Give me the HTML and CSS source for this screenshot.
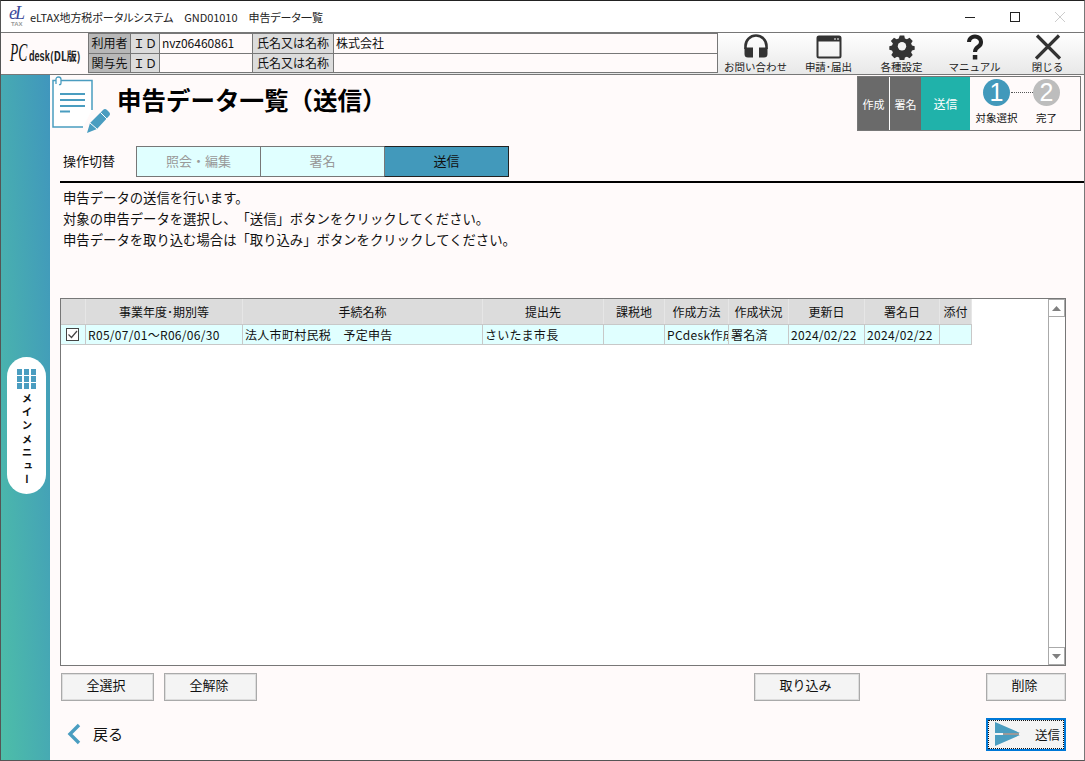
FILE: index.html
```html
<!DOCTYPE html>
<html lang="ja">
<head>
    <meta charset="UTF-8">
    <title>申告データ一覧</title>
    <link rel="stylesheet" href="styles.css">
</head>
<body>
<div class="window">
    <div class="titlebar">
        <div class="app_logo"><span class="el">eL</span><span class="tax">TAX</span></div>
        <div class="app_title">eLTAX地方税ポータルシステム　GND01010　申告データ一覧</div>
        <div class="win_btns">
            <span class="win_btn"><svg width="12" height="12" viewBox="0 0 12 12"><path d="M1 6.5h10" stroke="#222" fill="none"/></svg></span>
            <span class="win_btn"><svg width="12" height="12" viewBox="0 0 12 12"><rect x="1.5" y="1.5" width="9" height="9" stroke="#222" fill="none"/></svg></span>
            <span class="win_btn"><svg width="12" height="12" viewBox="0 0 12 12"><path d="M1 1l10 10M11 1L1 11" stroke="#ccc" fill="none"/></svg></span>
        </div>
    </div>

    <div class="toolbar">
        <div class="pc_logo"><span class="pc">PC</span><span class="desk">desk</span><span class="dl">(DL版)</span></div>
        <div class="user_table">
            <div class="cell head">利用者</div>
            <div class="cell label">ＩＤ</div>
            <div class="cell val">nvz06460861</div>
            <div class="cell label">氏名又は名称</div>
            <div class="cell val name">株式会社</div>
            <div class="cell head">関与先</div>
            <div class="cell label">ＩＤ</div>
            <div class="cell val"></div>
            <div class="cell label">氏名又は名称</div>
            <div class="cell val"></div>
        </div>
        <div class="tools">
            <div class="tool">
                <svg width="26" height="26" viewBox="0 0 26 26"><path d="M2.500 15V12a10.500 10.500 0 0 1 21 0v3" fill="none" stroke="#333" stroke-width="2.600"/><path d="M1.500 13.500h8.500v10H5q-3.500 0-3.500-3.500zM24.500 13.500H16v10h5q3.500 0 3.500-3.500z" fill="#333"/></svg>
                <span>お問い合わせ</span>
            </div>
            <div class="tool">
                <svg width="26" height="26" viewBox="0 0 26 26"><rect x="1.500" y="2.500" width="23" height="21" rx="1.500" fill="none" stroke="#333" stroke-width="2"/><rect x="1.500" y="2.500" width="23" height="5" fill="#333"/><path d="M18 5h2M21 5h2" stroke="#fff"/></svg>
                <span>申請･届出</span>
            </div>
            <div class="tool">
                <svg width="26" height="26" viewBox="0 0 26 26"><path d="M10.500 1h5l.7 3.300 2.300 1 2.900-1.800 3.500 3.500-1.800 2.900 1 2.300 3 .7v4l-3 .7-1 2.300 1.800 2.900-3.500 3.500-2.900-1.800-2.300 1-.7 3.300h-5l-.7-3.300-2.300-1-2.900 1.800-3.500-3.500 1.800-2.900-1-2.300-3-.7v-4l3-.7 1-2.300L.6 7 4.100 3.500l2.900 1.800 2.300-1z" transform="translate(1.300 .6) scale(.9)" fill="#333"/><circle cx="13" cy="12.300" r="4.200" fill="#f4f4f4"/></svg>
                <span>各種設定</span>
            </div>
            <div class="tool">
                <svg width="26" height="26" viewBox="0 0 26 26"><path d="M7 8a6 5.500 0 1 1 9.500 4.500c-2.300 1.500-3.500 2.500-3.500 5.500" fill="none" stroke="#222" stroke-width="4"/><rect x="10.800" y="21" width="4.500" height="4.500" fill="#222"/></svg>
                <span>マニュアル</span>
            </div>
            <div class="tool">
                <svg width="26" height="26" viewBox="0 0 26 26"><path d="M2 1.500l23 23M24 1.500L1 24.500" stroke="#333" stroke-width="3.200" fill="none"/></svg>
                <span>閉じる</span>
            </div>
        </div>
    </div>

    <div class="body_wrap">
        <div class="side">
            <div class="side_menu">
                <div class="grid_icon"><i></i><i></i><i></i><i></i><i></i><i></i><i></i><i></i><i></i></div>
                <div class="side_text">メインメニュー</div>
            </div>
        </div>

        <div class="main">
            <div class="page_head">
                <svg class="page_icon" width="58" height="58" viewBox="0 0 58 58">
                    <path d="M31 51H1V4.500h39V34" fill="#fff" stroke="#4a9dc0" stroke-width="1.500"/>
                    <path d="M4 8V3.500Q4 1 6.500 1T9 3.500V7Q9 9 7 8.500" fill="#fff" stroke="#4a9dc0" stroke-width="1.300"/>
                    <path d="M8 18h25M8 24h25M8 30h25M8 35.500h10" stroke="#4a9dc0" stroke-width="1.800" fill="none"/>
                    <path d="M35 57l3-10 13-13q2-2 4 0l2 2q2 2 0 4L45 53z" fill="#4a9dc0"/>
                    <path d="M48.500 36.500l6.500 6.500M38 47l7 6" stroke="#fff" fill="none"/>
                </svg>
                <h1 class="page_title">申告データ一覧（送信）</h1>
                <div class="steps">
                    <div class="step gray first">作成</div>
                    <div class="step gray">署名</div>
                    <div class="step now">送信</div>
                    <div class="progress">
                        <div class="prog_item"><span class="num blue">1</span><span>対象選択</span></div>
                        <div class="dots"></div>
                        <div class="prog_item"><span class="num gray2">2</span><span>完了</span></div>
                    </div>
                </div>
            </div>

            <div class="switch_row">
                <div class="switch_label">操作切替</div>
                <div class="tab">照会・編集</div>
                <div class="tab">署名</div>
                <div class="tab on">送信</div>
            </div>

            <div class="guide">
                <p>申告データの送信を行います。</p>
                <p>対象の申告データを選択し、「送信」ボタンをクリックしてください。</p>
                <p>申告データを取り込む場合は「取り込み」ボタンをクリックしてください。</p>
            </div>

            <div class="list_box">
                <div class="list">
                    <div class="row row_head">
                        <div class="c c0"></div>
                        <div class="c c1">事業年度･期別等</div>
                        <div class="c c2">手続名称</div>
                        <div class="c c3">提出先</div>
                        <div class="c c4">課税地</div>
                        <div class="c c5">作成方法</div>
                        <div class="c c6">作成状況</div>
                        <div class="c c7">更新日</div>
                        <div class="c c8">署名日</div>
                        <div class="c c9">添付</div>
                    </div>
                    <div class="row row_data">
                        <div class="c c0"><span class="check"><svg width="13" height="13" viewBox="0 0 13 13"><path d="M2.500 6.500l3 3 5.500-6.500" fill="none" stroke="#444" stroke-width="1.200"/></svg></span></div>
                        <div class="c c1">R05/07/01～R06/06/30</div>
                        <div class="c c2">法人市町村民税　予定申告</div>
                        <div class="c c3">さいたま市長</div>
                        <div class="c c4"></div>
                        <div class="c c5">PCdesk作成</div>
                        <div class="c c6">署名済</div>
                        <div class="c c7">2024/02/22</div>
                        <div class="c c8">2024/02/22</div>
                        <div class="c c9"></div>
                    </div>
                </div>
                <div class="scrollbar">
                    <div class="sb_btn"><svg width="9" height="5" viewBox="0 0 9 5"><path d="M4.500 0L9 5H0z" fill="#808080"/></svg></div>
                    <div class="sb_btn"><svg width="9" height="5" viewBox="0 0 9 5"><path d="M0 0h9L4.500 5z" fill="#808080"/></svg></div>
                </div>
            </div>

            <div class="btn_row">
                <button class="btn w93">全選択</button>
                <button class="btn w93">全解除</button>
                <div class="spacer"></div>
                <button class="btn w106">取り込み</button>
                <button class="btn w80 del">削除</button>
            </div>

            <div class="foot_row">
                <div class="back">
                    <svg width="16" height="22" viewBox="0 0 16 22"><path d="M13 2L4 11l9 9" fill="none" stroke="#4a9dc0" stroke-width="3.400"/></svg>
                    <span>戻る</span>
                </div>
                <button class="send">
                    <span class="send_in">
                        <svg width="25" height="24" viewBox="0 0 25 24"><path d="M0 0L25 11H0zM0 24L25 13H0z" fill="#4a9dc0"/><path d="M8 12h16" stroke="#999" stroke-width="2"/></svg>
                        <span>送信</span>
                    </span>
                </button>
            </div>
        </div>
    </div>
</div>
</body>
</html>
```

FILE: styles.css
```css
*{
    box-sizing: border-box;
}

html,body{
    margin: 0;
    padding: 0;
}

body{
    width: 1085px;
    height: 761px;
    overflow: hidden;
    font-family: "Noto Sans CJK JP", "Noto Sans", sans-serif;
    font-size: 12px;
    color: #111;
    text-spacing-trim: space-all;
}

.window{
    display: flex;
    flex-direction: column;
    width: 1085px;
    height: 761px;
    border: 1px solid #555;
    border-top-color: #222;
    border-right-color: #777;
    background: #fff;
}

.titlebar{
    display: flex;
    align-items: center;
    height: 31px;
    padding-left: 8px;
    background: #fff;
}

.app_logo{
    position: relative;
    width: 21px;
    height: 22px;
    font-family: "Liberation Serif", serif;
    font-style: italic;
}

.app_logo .el{
    position: absolute;
    left: 0;
    top: 2px;
    font-size: 18px;
    line-height: 11px;
    color: #3a4a9a;
    letter-spacing: -2px;
}

.app_logo .tax{
    position: absolute;
    left: 2px;
    top: 15px;
    font-family: "Liberation Sans", sans-serif;
    font-size: 6px;
    line-height: 6px;
    font-weight: bold;
    font-style: normal;
    color: #999;
}

.app_title{
    font-size: 11px;
    font-feature-settings: "palt";
    letter-spacing: -.05px;
    color: #222;
    white-space: pre;
}

.win_btns{
    display: flex;
    margin-left: auto;
    padding-right: 2px;
}

.win_btn{
    display: flex;
    width: 45px;
    height: 30px;
    justify-content: center;
    align-items: center;
}

.toolbar{
    display: flex;
    height: 43px;
    border-top: 1px solid #777;
    border-bottom: 1px solid #777;
    background: linear-gradient(#fff, #e8e8e8);
}

.pc_logo{
    display: flex;
    align-items: baseline;
    width: 87px;
    padding: 6px 0 0 9px;
    white-space: nowrap;
    background: #fffafa;
}

.pc{
    display: inline-block;
    width: 19px;
    font-family: "Liberation Serif", serif;
    font-style: italic;
    font-size: 26px;
    line-height: 28px;
    transform: scaleX(.52);
    transform-origin: left;
    color: #111;
}

.desk{
    display: inline-block;
    width: 21px;
    font-family: "Liberation Sans", sans-serif;
    font-size: 14px;
    font-weight: bold;
    transform: scaleX(.65);
    transform-origin: left;
    color: #222;
}

.dl{
    display: inline-block;
    width: 30px;
    font-size: 12.500px;
    font-weight: bold;
    transform: scaleX(.8);
    transform-origin: left;
    color: #222;
}

.user_table{
    display: grid;
    grid-template-columns: 42px 29px 93px 81px 384px;
    grid-template-rows: 20px 20px;
    width: 630px;
    height: 40px;
    background: #fffafa;
    border-right: 1px solid #777;
}

.cell{
    border-top: 1px solid #777;
    border-left: 1px solid #777;
    padding-left: 2px;
    font-size: 12px;
    line-height: 18px;
    white-space: nowrap;
    overflow: hidden;
}

.cell:nth-child(n+6){
    border-bottom: 1px solid #777;
    line-height: 18px;
}

.head{
    background: #b8b8b8;
    text-align: center;
    padding: 0;
}

.label{
    background: #dcdcdc;
    text-align: center;
    padding: 0;
}

.val{
    background: #fffafa;
}

.tools{
    display: flex;
    flex: 1;
    padding-left: 1px;
}

.tool{
    display: flex;
    flex-direction: column;
    align-items: center;
    width: 73px;
    height: 41px;
    padding-top: 1px;
    font-size: 10.500px;
    line-height: 12px;
    color: #222;
}

.tool svg{
    flex: none;
}

.tool span{
    white-space: nowrap;
    margin-top: 1px;
}

.body_wrap{
    display: flex;
    flex: 1;
    min-height: 0;
}

.side{
    display: flex;
    flex: none;
    width: 49px;
    padding: 282px 0 0 6px;
    background: linear-gradient(to top right, #4dbea8, #4096bd);
}

.side_menu{
    display: flex;
    flex-direction: column;
    align-items: center;
    width: 39px;
    height: 137px;
    padding-top: 12px;
    border-radius: 20px;
    background: #fff;
}

.grid_icon{
    display: grid;
    grid-template-columns: repeat(3, 5.500px);
    grid-template-rows: repeat(3, 5.500px);
    gap: 1.500px;
}

.grid_icon i{
    background: #4a9dc0;
}

.side_text{
    margin-top: 4px;
    font-size: 10.500px;
    font-weight: bold;
    line-height: 14px;
    width: 14px;
    writing-mode: vertical-rl;
    letter-spacing: 3px;
    color: #111;
}

.main{
    display: flex;
    flex-direction: column;
    flex: 1;
    min-width: 0;
    padding-top: 1px;
    background: #fffafa;
}

.page_head{
    display: flex;
    height: 70px;
    padding-left: 2px;
}

.page_icon{
    flex: none;
}

.page_title{
    margin: 6px 0 0 7px;
    font-size: 24.500px;
    line-height: 36px;
    font-weight: bold;
    color: #000;
    white-space: nowrap;
}

.steps{
    display: flex;
    height: 55px;
    width: 224px;
    margin: 0 3px 0 auto;
    border: 1px solid #777;
    background: #fffafa;
    color: #fff;
}

.step{
    display: flex;
    align-items: center;
    justify-content: center;
    font-size: 11px;
}

.step.gray{
    width: 31px;
    background: #6a6a6a;
}

.step.first{
    width: 32px;
    border-right: 1px solid #fff;
}

.step.now{
    width: 49px;
    font-size: 12px;
    background: #20b2aa;
}

.progress{
    display: flex;
    flex: 1;
    padding-top: 2px;
    color: #111;
}

.prog_item{
    display: flex;
    flex-direction: column;
    align-items: center;
    width: 50px;
    font-size: 10.500px;
    line-height: 14px;
    white-space: nowrap;
}

.prog_item:first-child{
    margin-left: 1.500px;
}

.num{
    display: block;
    width: 27px;
    height: 27px;
    margin-bottom: 5px;
    border-radius: 50%;
    font-family: "Liberation Sans", sans-serif;
    font-size: 25px;
    line-height: 27px;
    text-align: center;
    color: #fff;
}

.num.blue{
    background: #4299bb;
}

.num.gray2{
    background: #bdbdbd;
}

.dots{
    flex: none;
    width: 22px;
    height: 1px;
    margin: 13px -11px 0;
    border-top: 1px dotted #555;
}

.switch_row{
    display: flex;
    align-items: stretch;
    height: 37px;
    margin-left: 10px;
    padding: 0 0 6px 3px;
    border-bottom: 2px solid #000;
}

.switch_label{
    width: 73px;
    line-height: 30px;
    font-size: 13px;
}

.tab{
    width: 125px;
    height: 31px;
    margin-right: -1px;
    border: 1px solid #777;
    background: #e0ffff;
    color: #999;
    font-size: 13px;
    line-height: 28px;
    text-align: center;
}

.tab.on{
    border-color: #222;
    border-left-color: #777;
    background: #4299bb;
    color: #111;
}

.guide{
    height: 115px;
    margin-left: 13px;
    padding-top: 4px;
    font-size: 13.350px;
    line-height: 21px;
}

.guide p{
    margin: 0;
    white-space: nowrap;
}

.list_box{
    display: flex;
    width: 1006px;
    height: 368px;
    margin-left: 10px;
    border: 1px solid #777;
    background: #fff;
}

.list{
    flex: 1;
}

.row{
    display: flex;
    width: 911px;
}

.row_head{
    height: 26px;
    background: #dcdcdc;
    border-bottom: 1px solid #c8c8c8;
}

.row_data{
    height: 20px;
    background: #e0ffff;
    border-bottom: 1px solid #c8c8c8;
    letter-spacing: .3px;
}

.c{
    flex: none;
    overflow: hidden;
    white-space: nowrap;
    border-right: 1px solid #c8c8c8;
    font-size: 12px;
    padding-left: 2px;
    line-height: 19px;
}

.row_head .c{
    padding: 0;
    text-align: center;
    line-height: 25px;
    border-right-color: #e6e6e6;
}

.c0{ width: 25px; }
.c1{ width: 157px; }
.c2{ width: 240px; }
.c3{ width: 121px; }
.c4{ width: 61px; }
.c5{ width: 64px; }
.c6{ width: 60px; }
.c7{ width: 76px; }
.c8{ width: 75px; }
.c9{ width: 32px; }

.row_data .c0{
    display: flex;
    justify-content: center;
    align-items: center;
    padding: 0 1px 0 0;
}

.check{
    display: block;
    width: 13px;
    height: 13px;
    border: 1px solid #444;
    background: #fff;
    line-height: 0;
}

.check svg{
    margin: -1px;
}

.scrollbar{
    display: flex;
    flex-direction: column;
    justify-content: space-between;
    flex: none;
    width: 17px;
    border-left: 1px solid #aaa;
    background: #fff;
}

.sb_btn{
    display: flex;
    align-items: center;
    justify-content: center;
    height: 18px;
    border: 1px solid #aaa;
    border-left: 0;
}

.btn_row{
    display: flex;
    width: 1005px;
    margin: 7px 0 0 11px;
    gap: 10px;
}

.spacer{
    flex: 1;
}

.btn{
    height: 28px;
    padding: 0 3px 5px 0;
    border: 1px solid #aaa;
    outline: 1px solid #ddd;
    outline-offset: -2px;
    background: #f4f4f4;
    font-family: inherit;
    font-size: 13px;
    color: #111;
}

.w93{ width: 93px; }
.w106{ width: 106px; }
.w80{ width: 80px; }
.del{ margin-left: 116px; }

.foot_row{
    display: flex;
    justify-content: space-between;
    align-items: center;
    width: 1005px;
    height: 34px;
    margin: 16px 0 0 11px;
}

.back{
    display: flex;
    align-items: center;
    gap: 11px;
    font-size: 15px;
    margin-left: 5px;
    padding-bottom: 1px;
}

.send{
    width: 80px;
    height: 33px;
    padding: 0;
    border: 2px solid #0078d7;
    background: #f4f4f4;
    font-family: inherit;
    font-size: 12.500px;
    color: #111;
}

.send_in{
    display: flex;
    align-items: center;
    justify-content: space-between;
    height: 100%;
    padding: 0 3px 0 6px;
    border: 1px dotted #111;
}
```
